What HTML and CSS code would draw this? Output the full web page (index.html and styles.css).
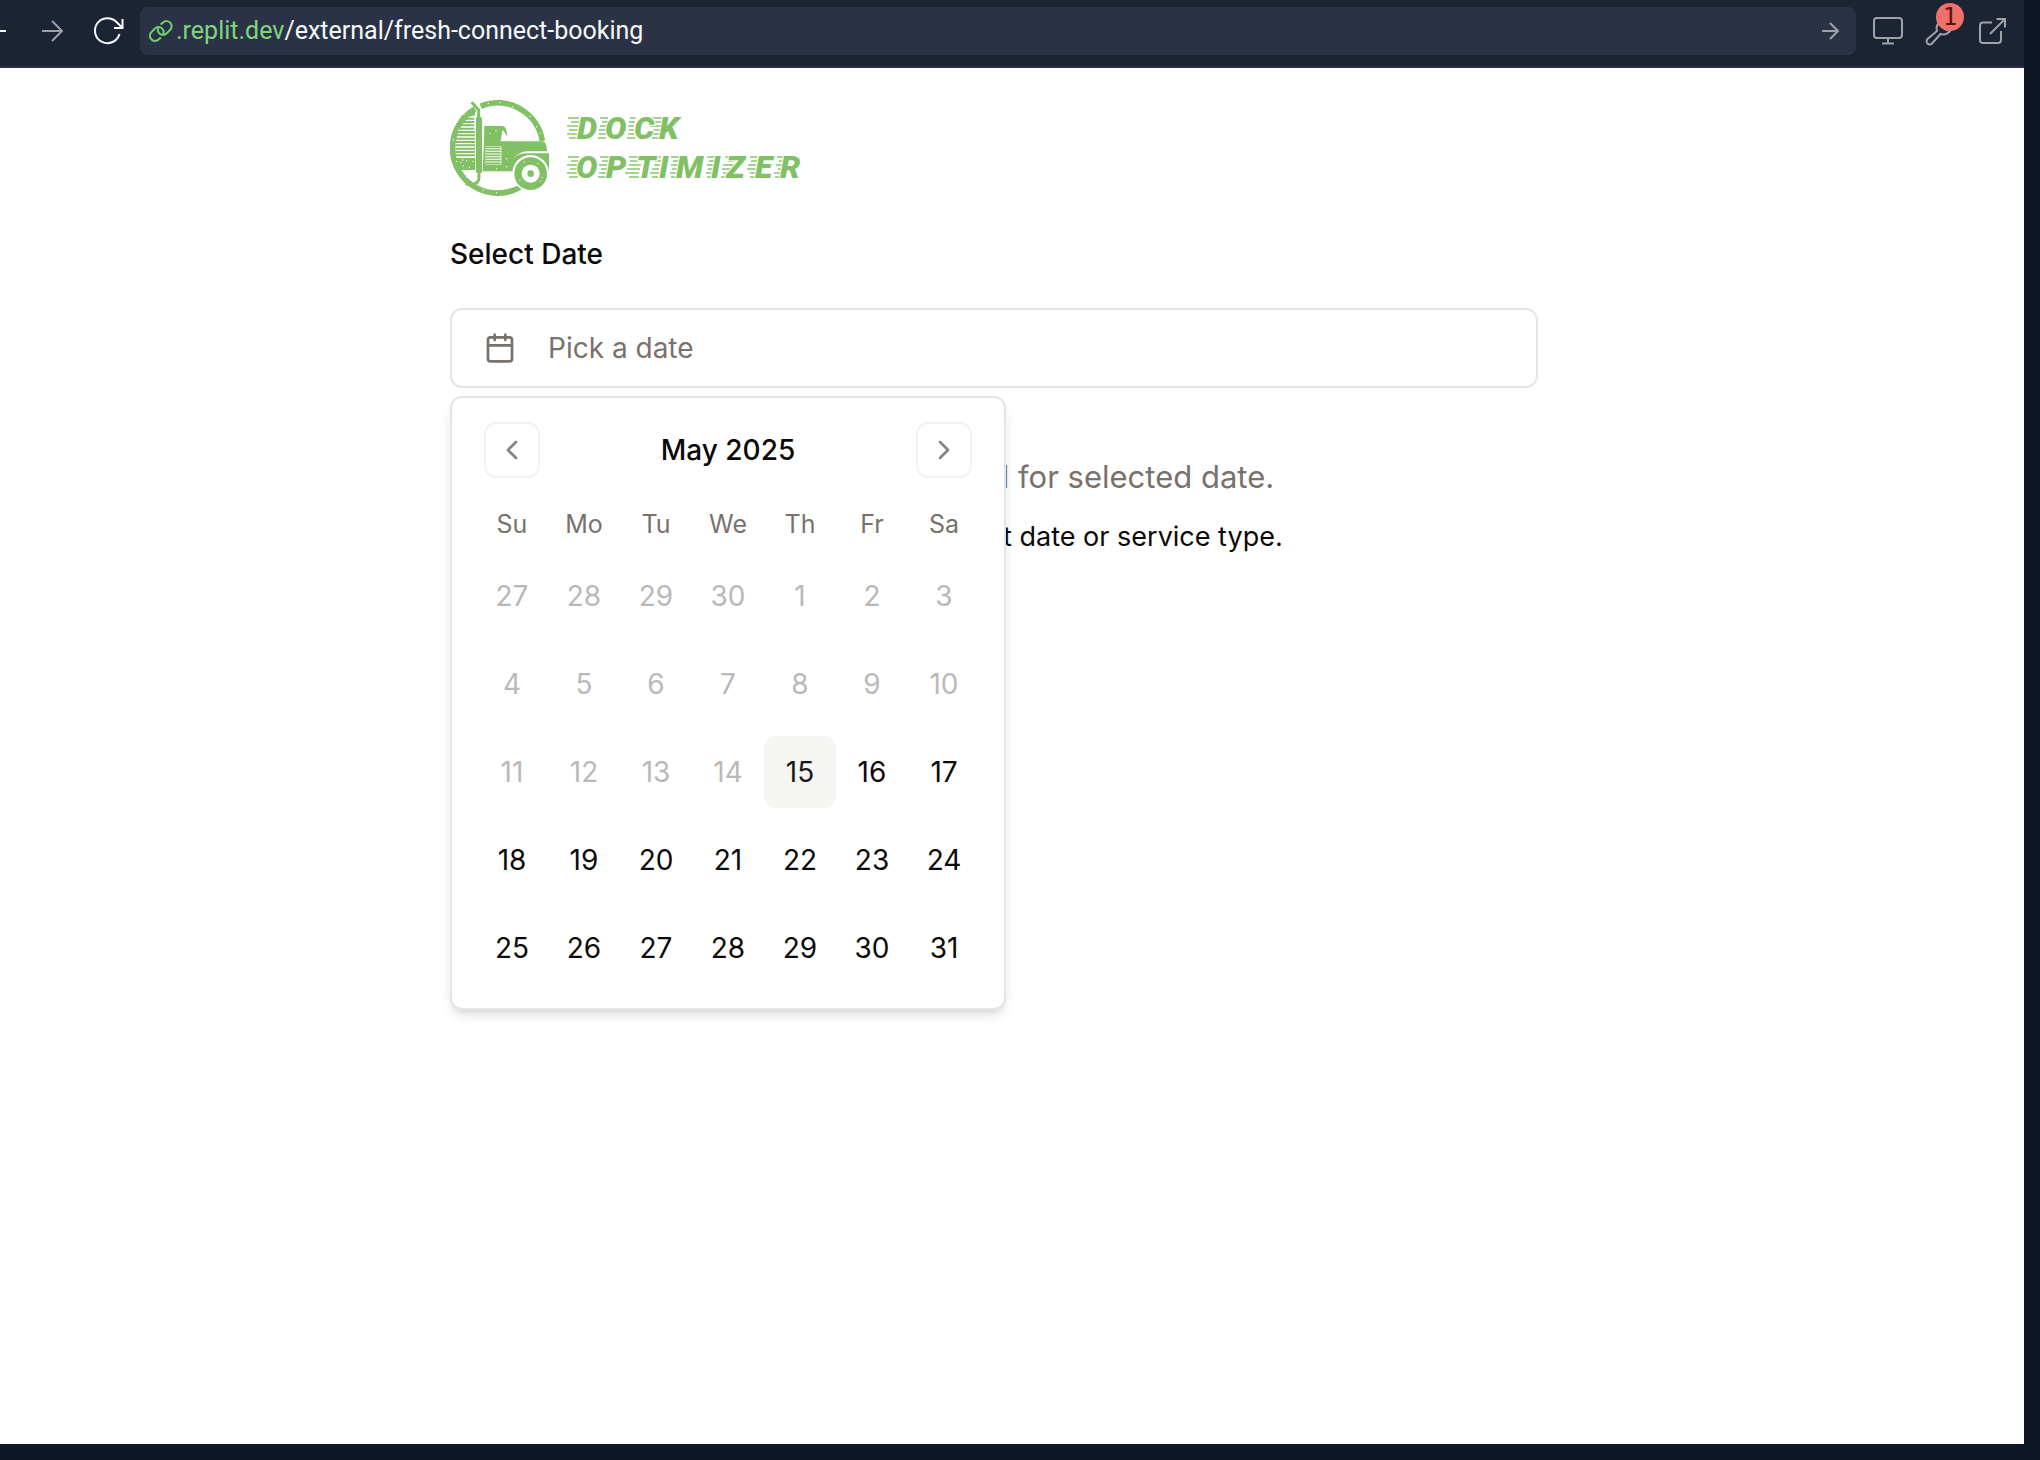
FILE: index.html
```html
<!DOCTYPE html>
<html lang="en">
<head>
<meta charset="utf-8">
<meta name="viewport" content="width=device-width, initial-scale=1">
<title>Dock Optimizer booking</title>
<link rel="stylesheet" href="styles.css">
</head>
<body>
<div class="frame">
  <header class="toolbar">
    <button class="tool tool-back" aria-label="Back"><svg width="28" height="28" viewBox="0 0 28 28"><path d="M24 14H4M13 4 3 14l10 10"/></svg></button>
    <button class="tool tool-forward" aria-label="Forward"><svg width="28" height="28" viewBox="0 0 28 28"><path d="M4 14h20M14 4l10 10-10 10"/></svg></button>
    <button class="tool tool-reload" aria-label="Reload"><svg width="32" height="32" viewBox="0 0 32 32"><path d="M27.500 19A12.500 12.500 0 1 1 24.500 7L30 12.500M30.500 4v9H22"/></svg></button>
    <div class="address">
      <svg class="link-icon" width="26" height="26" viewBox="0 0 26 26"><path d="M10.500 9.500a5 5 0 0 0 1 6 5 5 0 0 0 7 0l3.500-3.500a5 5 0 0 0-7-7.500L12.500 6.500M15 16.500a5 5 0 0 0-1-6 5 5 0 0 0-7 0L3.500 14a5 5 0 0 0 7 7.500L13 19.500"/></svg>
      <a class="url" href="#"><span class="host">.replit.dev</span>/external/fresh-connect-booking</a>
      <button class="tool" aria-label="Go"><svg width="20" height="20" viewBox="0 0 20 20"><path d="M2 10h16M10 2l8 8-8 8"/></svg></button>
    </div>
    <nav class="tools">
      <button class="tool" aria-label="Device"><svg width="32" height="32" viewBox="0 0 32 32"><rect x="2" y="3" width="28" height="20" rx="3"/><path d="M16 23v5M10 28.500h12"/></svg></button>
      <button class="tool tool-wrench" aria-label="Developer tools"><svg width="32" height="32" viewBox="0 0 32 32"><path d="M20 5a8.500 8.500 0 0 0-7 11L3.500 24a3 3 0 0 0 4.500 4.500L16.500 19a8.500 8.500 0 0 0 11-7l-5 3-5-5z"/></svg><span class="badge">1</span></button>
      <button class="tool" aria-label="Open in new tab"><svg width="32" height="32" viewBox="0 0 32 32"><path d="M16 7.500H7a3 3 0 0 0-3 3V25a3 3 0 0 0 3 3h15a3 3 0 0 0 3-3v-9M14 19 29 4M20.500 4H29v8.500"/></svg></button>
    </nav>
  </header>

  <main class="page">
    <div class="column">
      <svg class="logo" width="356" height="100" viewBox="0 0 356 100" role="img" aria-label="Dock Optimizer">
        <g class="truck" transform="translate(-10 -8) scale(.3333)">
          <g class="stroke">
            <path stroke-width="17" d="M122 48.500A135.500 135.500 0 0 1 307 153M240.800 291.300A135.500 135.500 0 0 1 37.500 174A135.500 135.500 0 0 1 105 57"/>
            <path stroke-width="6" d="M64 86h39M56 96h47M52 106h51M50 116h53M48 126h57M48 136h57M46 146h59M46 156h59M46 166h59M46 176h59M46 186h59M46 196h59"/>
            <path stroke-width="9" stroke-linecap="round" d="M97 39l19 21v26M117 240v22q-1 20-20 20H80"/>
          </g>
          <path d="M64 78 105 56v20L60 88zM38 204h68v36H56q-12-14-18-36zM108 84q9-8 18 0v164h-18z"/>
          <path d="M133 108h53q12 2 13 13l4 20-12-19h-4l-5 32h127q12 4 12 30H262q-50 4-48 60h-86l4-90z"/>
          <path d="M210 240q0-50 52-50h65v54h-8q-8-42-47-42-42 0-48 42h-14z"/>
          <path class="paper" d="M137 168h47v56h-47z"/>
          <path class="stroke" stroke-width="5" d="M138 172h44M138 180h44M138 188h44M138 196h44M138 204h44M138 212h44M138 220h44"/>
          <circle class="paper" cx="272" cy="250" r="55"/><circle cx="272" cy="251" r="49"/><circle class="paper" cx="272" cy="251" r="27"/><circle cx="272" cy="251" r="10"/>
          <path class="specks" d="M72 72v.1M55 120v.1M40 150v.1M145 40v.1M180 38v.1M218 50v.1M270 80v.1M290 110v.1M300 130v.1M50 214v.1M70 228v.1M68 210v.1M88 232v.1M98 214v.1M62 218v.1M80 212v.1M150 130v.1M168 122v.1M170 236v.1M200 206v.1M200 230v.1M130 300v.1M170 308v.1M80 262v.1M240 270v.1M300 274v.1M306 262v.1M252 216v.1M294 220v.1"/>
        </g>
        <g class="streaks">
          <path d="M118 20h11M121 24h8M117 28h11M119 32h9M117 36h10M119 40h8M150 20h8M152 24h6M150 28h7M149 32h7M149 36h7M148 40h8M180 20h6M179 24h6M178 28h6M179 32h5M178 36h6M177 40h8M201 20h12M204 24h8M200 28h11M203 32h8M201 36h9M202 40h8"/>
          <path d="M118 59h11M121 63h7M117 67h10M120 71h7M117 75h10M119 79h9M150 59h9M152 63h6M149 67h8M151 71h6M149 75h7M148 79h8M179 59h9M180 63h8M179 67h12M177 71h13M175 75h14M179 79h10M207 59h4M205 63h6M204 67h6M202 71h7M200 75h9M202 79h6M221 59h9M223 63h6M221 67h7M222 71h6M220 75h7M221 79h5M257 59h8M259 63h6M257 67h7M258 71h6M256 75h7M257 79h6M275 59h6M278 63h6M273 67h13M272 71h10M273 75h7M271 79h6M300 59h7M301 63h6M298 67h8M297 71h9M300 75h6M300 79h5M327 59h7M329 63h5M326 67h7M328 71h5M324 75h8M325 79h7"/>
        </g>
        <text class="wordmark" y="41" x="127 155 184 209">DOCK</text>
        <text class="wordmark" y="80" x="126 156 186 209 226 261 276 305 330">OPTIMIZER</text>
      </svg>

      <h1 class="title" id="date-title">Select Date</h1>

      <div class="date-field">
        <button class="date-trigger" aria-expanded="true">
          <svg width="32" height="32" viewBox="0 0 24 24"><path d="M8 2v4M16 2v4M3 10h18"/><rect x="3" y="4" width="18" height="18" rx="2"/></svg>
          Pick a date
        </button>

        <section class="calendar" aria-labelledby="date-title">
          <div class="caption">
            <button class="month-nav" aria-label="Previous month"><svg width="32" height="32" viewBox="0 0 24 24"><path d="m15 18-6-6 6-6"/></svg></button>
            <h2 class="month">May 2025</h2>
            <button class="month-nav" aria-label="Next month"><svg width="32" height="32" viewBox="0 0 24 24"><path d="m9 18 6-6-6-6"/></svg></button>
          </div>
          <table class="days">
            <thead><tr><th>Su</th><th>Mo</th><th>Tu</th><th>We</th><th>Th</th><th>Fr</th><th>Sa</th></tr></thead>
            <tbody>
              <tr><td><button disabled>27</button></td><td><button disabled>28</button></td><td><button disabled>29</button></td><td><button disabled>30</button></td><td><button disabled>1</button></td><td><button disabled>2</button></td><td><button disabled>3</button></td></tr>
              <tr><td><button disabled>4</button></td><td><button disabled>5</button></td><td><button disabled>6</button></td><td><button disabled>7</button></td><td><button disabled>8</button></td><td><button disabled>9</button></td><td><button disabled>10</button></td></tr>
              <tr><td><button disabled>11</button></td><td><button disabled>12</button></td><td><button disabled>13</button></td><td><button disabled>14</button></td><td><button class="today">15</button></td><td><button>16</button></td><td><button>17</button></td></tr>
              <tr><td><button>18</button></td><td><button>19</button></td><td><button>20</button></td><td><button>21</button></td><td><button>22</button></td><td><button>23</button></td><td><button>24</button></td></tr>
              <tr><td><button>25</button></td><td><button>26</button></td><td><button>27</button></td><td><button>28</button></td><td><button>29</button></td><td><button>30</button></td><td><button>31</button></td></tr>
            </tbody>
          </table>
        </section>
      </div>

      <div class="empty">
        <p class="empty-title">No open slots found for selected date.</p>
        <p class="empty-hint">Please select a different date or service type.</p>
      </div>
    </div>
  </main>
</div>
</body>
</html>
```
FILE: styles.css
```css
* { box-sizing: border-box; }

body {
  margin: 0;
  background: #0e1525;
  color: #0c0a09;
  font-family: Inter, "Liberation Sans", sans-serif;
  font-size: 28px;
  line-height: 40px;
}

button {
  margin: 0;
  padding: 0;
  border: 0;
  background: none;
  color: inherit;
  font: inherit;
}

h1, h2, p { margin: 0; font-weight: 400; }

svg { display: block; flex: none; }

.frame {
  display: flex;
  flex-direction: column;
  min-height: 100vh;
  padding: 0 16px 16px 0;
}

/* Browser bar */
.toolbar {
  display: flex;
  align-items: center;
  height: 68px;
  padding: 0 16px 4px 0;
  overflow: hidden;
  background: #1c2333;
  border-bottom: 2px solid #2b3245;
}

.tool {
  display: flex;
  align-items: center;
  color: #9da2a6;
}

.tool svg, .link-icon {
  fill: none;
  stroke: currentColor;
  stroke-width: 2;
}

.tool-back { margin-left: -18px; color: #f5f9fc; }
.tool-forward { margin-left: 28px; }
.tool-reload { margin: 0 16px 0 26px; color: #f5f9fc; }

.address {
  display: flex;
  flex: 1;
  align-items: center;
  gap: 2px;
  height: 48px;
  padding: 0 16px 0 8px;
  border-radius: 8px;
  background: #2b3245;
}

.link-icon { color: #6bd36b; }

.url {
  flex: 1;
  color: #f5f9fc;
  font-family: Roboto, "Liberation Sans", sans-serif;
  font-size: 25px;
  text-decoration: none;
}

.host { color: #7ed67c; }

.tools {
  display: flex;
  gap: 20px;
  margin-left: 16px;
}

.tool-wrench { position: relative; }

.badge {
  position: absolute;
  top: -12px;
  left: 12px;
  width: 28px;
  height: 28px;
  border-radius: 50%;
  background: #f0706a;
  color: #5c0f0c;
  font-family: "DejaVu Sans Mono", monospace;
  font-size: 24px;
  line-height: 28px;
  text-align: center;
}

/* Booking page */
.page {
  flex: 1;
  padding: 30px 36px 30px 0;
  background: #fff;
}

.column {
  max-width: 1088px;
  margin: 0 auto;
}

.truck { fill: #82c066; }
.truck .stroke { fill: none; stroke: #82c066; }
.truck .paper { fill: #fff; }
.truck .specks { fill: none; stroke: #fff; stroke-width: 4; stroke-linecap: round; }
.streaks { fill: none; stroke: #a6d292; stroke-width: 2; }

.wordmark {
  fill: #82c066;
  stroke: #fff;
  stroke-width: 2;
  paint-order: stroke;
  font-family: Roboto, "Liberation Sans", sans-serif;
  font-size: 32px;
  font-style: italic;
  font-weight: 900;
}

.title {
  margin: 36px 0 34px;
  font-size: 28px;
  font-weight: 500;
}

.date-field { position: relative; }

.date-trigger {
  display: flex;
  align-items: center;
  gap: 32px;
  width: 100%;
  height: 80px;
  padding: 0 32px;
  border: 2px solid #e5e5e5;
  border-radius: 12px;
  color: #78716c;
  text-align: left;
}

.date-trigger svg, .month-nav svg {
  fill: none;
  stroke: currentColor;
  stroke-width: 2;
  stroke-linecap: round;
  stroke-linejoin: round;
}

.calendar {
  position: absolute;
  top: 100%;
  left: 0;
  margin-top: 8px;
  padding: 24px;
  border: 2px solid #e5e5e5;
  border-radius: 12px;
  background: #fff;
  box-shadow: 0 8px 12px -2px rgba(0, 0, 0, .1), 0 4px 8px -4px rgba(0, 0, 0, .1);
}

.caption {
  display: flex;
  align-items: center;
  justify-content: space-between;
  padding: 0 8px;
}

.month { font-size: 28px; font-weight: 500; }

.month-nav {
  display: flex;
  align-items: center;
  justify-content: center;
  width: 56px;
  height: 56px;
  border: 2px solid #f2f2f2;
  border-radius: 12px;
  color: #858484;
}

.days {
  margin-top: 26px;
  border-collapse: collapse;
}

.days th {
  width: 72px;
  padding: 0;
  color: #78716c;
  font-size: 25px;
  font-weight: 400;
}

.days td { padding: 16px 0 0; }

.days button {
  display: block;
  width: 72px;
  height: 72px;
  border-radius: 12px;
}

.days button:disabled { color: #bcb8b6; }
.days .today { background: #f5f5f4; color: #1c1917; }

.empty {
  margin-top: 65px;
  text-align: center;
}

.empty-title {
  color: #78716c;
  font-size: 31px;
  line-height: 48px;
}

.empty-hint { margin-top: 16px; font-size: 27px; }
```
